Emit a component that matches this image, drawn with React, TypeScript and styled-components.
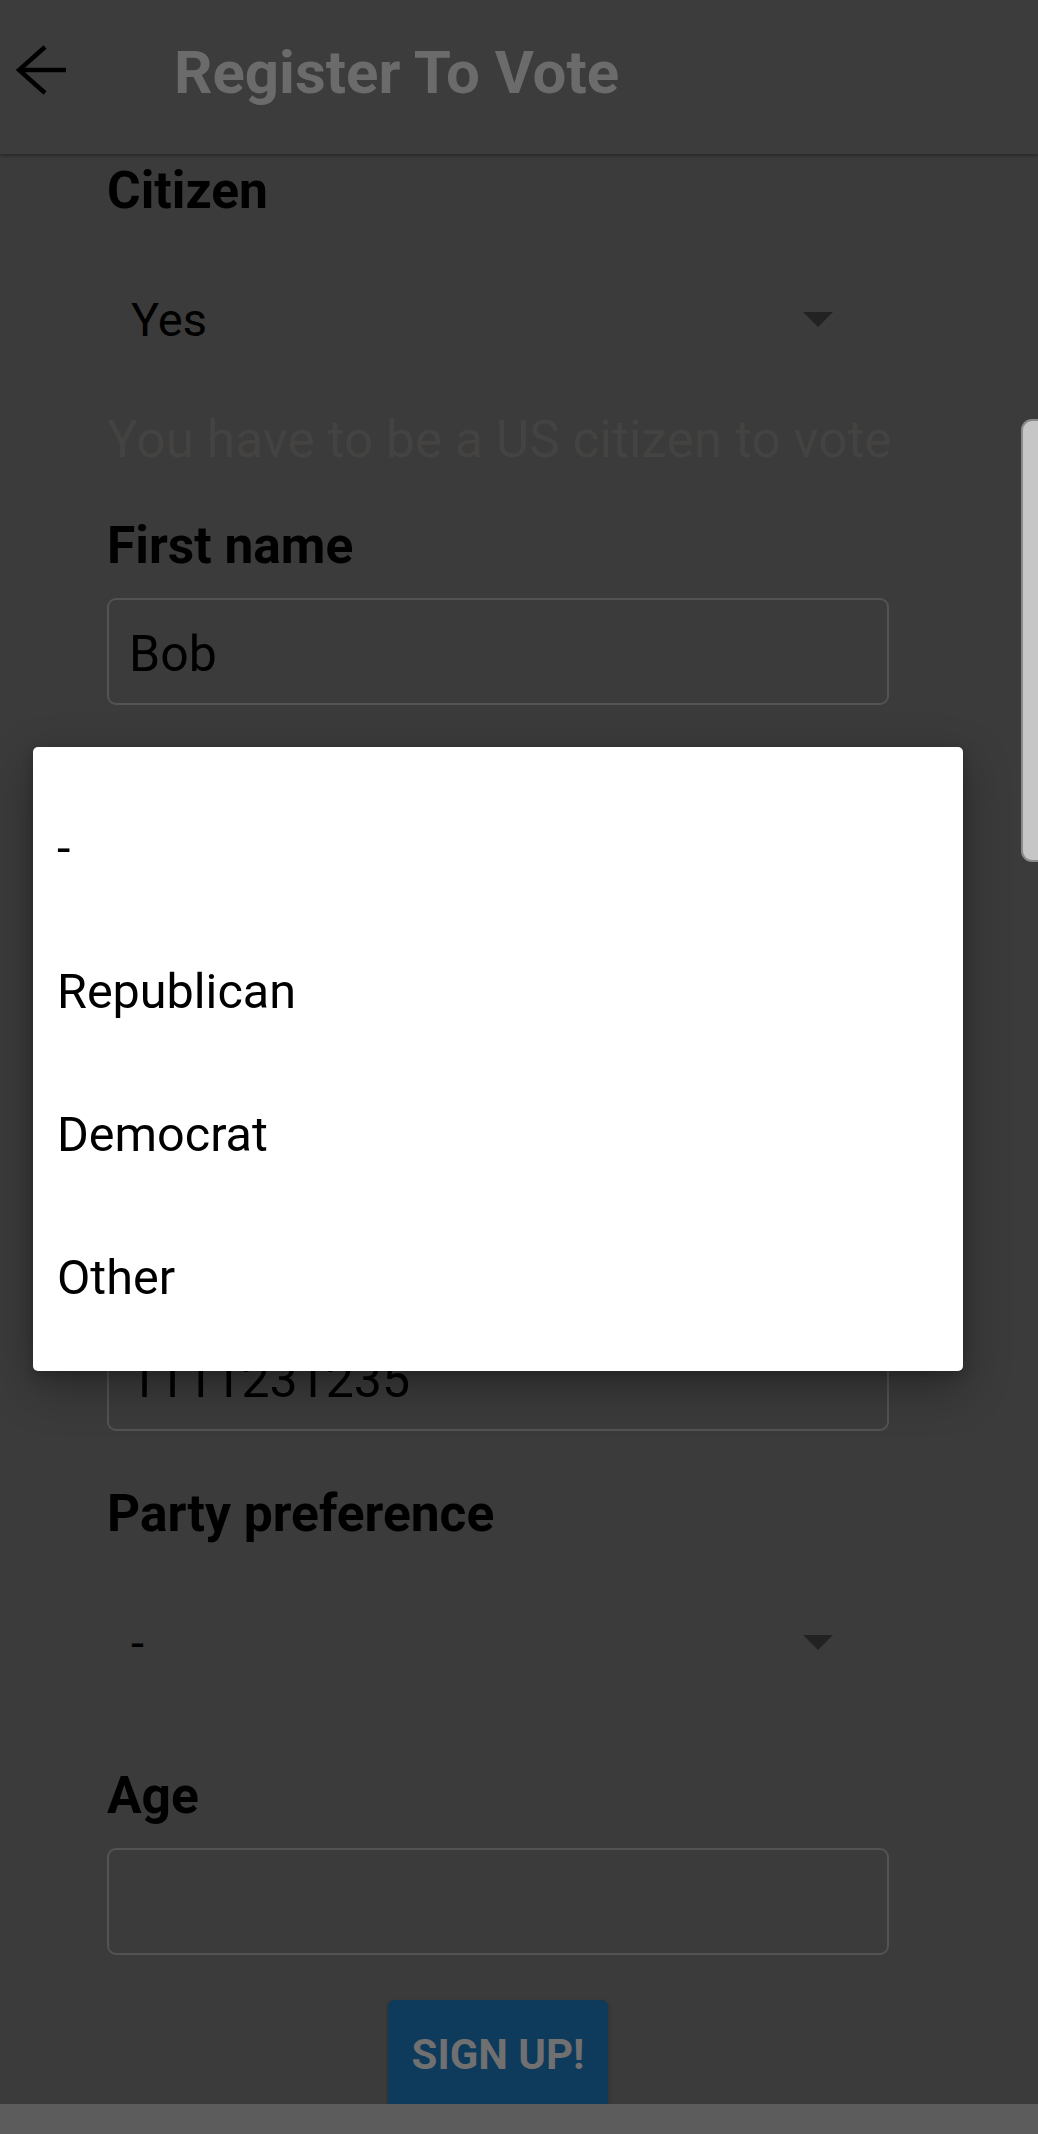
import React from "react";
import styled, { createGlobalStyle } from "styled-components";

const GlobalStyle = createGlobalStyle`
  html, body { margin: 0; padding: 0; background: #3a3b3a; }
  body { font-family: Roboto, "Noto Sans", Arial, sans-serif; }
  * { box-sizing: border-box; }
`;

const Screen = styled.div`
  position: relative;
  width: 1038px;
  height: 2134px;
  overflow: hidden;
  display: flex;
  flex-direction: column;
  background: #3a3b3a;
`;

const AppBar = styled.header`
  position: relative;
  z-index: 1;
  flex: none;
  height: 154px;
  display: flex;
  align-items: flex-start;
  padding: 45px 0 0 16px;
  background: #3b3c3b;
  box-shadow: 0 2px 3px rgba(0, 0, 0, 0.3);
`;

const BackIcon = styled.svg`
  flex: none;
  width: 52px;
  height: 50px;
`;

const Title = styled.h1`
  margin: -2px 0 0 106px;
  font-family: Roboto, sans-serif;
  font-weight: 700;
  font-size: 60px;
  line-height: 60px;
  letter-spacing: 0;
  color: #6b6b6b;
`;

const ScrollArea = styled.main`
  flex: 1;
  overflow: hidden;
`;

const Form = styled.div`
  width: 782px;
  margin-left: 107px;
  display: flex;
  flex-direction: column;
`;

const Field = styled.div<{ $top: number; $gap: number }>`
  display: flex;
  flex-direction: column;
  margin-top: ${(p) => p.$top}px;
  gap: ${(p) => p.$gap}px;
`;

const Label = styled.div`
  font-weight: 700;
  font-size: 51.5px;
  line-height: 60px;
  color: #000;
`;

const SelectBox = styled.div`
  height: 106px;
  display: flex;
  align-items: center;
  justify-content: space-between;
  padding: 0 56px 0 24px;
  font-size: 47px;
  color: #000;
`;

const Caret = styled.span`
  width: 0;
  height: 0;
  border-left: 15px solid transparent;
  border-right: 15px solid transparent;
  border-top: 15px solid #222;
`;

const Hint = styled.div`
  margin-top: 38px;
  font-size: 51.5px;
  line-height: 60px;
  color: #444342;
  white-space: nowrap;
`;

const TextBox = styled.div`
  height: 107px;
  display: flex;
  align-items: center;
  padding: 5px 0 0 20px;
  border: 2px solid #535353;
  border-radius: 9px;
  font-size: 50px;
  color: #000;
`;

const SubmitButton = styled.button`
  align-self: center;
  margin-top: 45px;
  width: 220px;
  height: 108px;
  border: none;
  border-radius: 6px;
  background: #0e3a5c;
  box-shadow: 0 2px 4px rgba(0, 0, 0, 0.25);
  font-family: Roboto, sans-serif;
  font-weight: 700;
  font-size: 42px;
  color: #707070;
  padding: 0;
`;

const BottomBar = styled.div`
  flex: none;
  height: 30px;
  background: #5c5c5d;
  position: relative;
  z-index: 1;
`;

const Dialog = styled.div`
  position: absolute;
  left: 33px;
  top: 747px;
  width: 930px;
  height: 624px;
  padding-top: 30px;
  background: #fff;
  border-radius: 5px;
  box-shadow: 0 16px 48px rgba(0, 0, 0, 0.32), 0 4px 12px rgba(0, 0, 0, 0.2);
  z-index: 3;
`;

const Option = styled.div`
  height: 143px;
  display: flex;
  align-items: center;
  padding-left: 24px;
  font-size: 48.5px;
  color: #000;
`;

const ScrollThumb = styled.div`
  position: absolute;
  right: 0;
  top: 419px;
  width: 17px;
  height: 443px;
  background: #c6c6c6;
  border: 2px solid #8a8a8a;
  border-right: none;
  border-radius: 11px 0 0 11px;
  z-index: 2;
`;

const textFields = [
  { label: "First name", value: "Bob" },
  { label: "Last name", value: "" },
  { label: "Email", value: "" },
  { label: "Phone number", value: "1111231235" },
];

const parties = ["-", "Republican", "Democrat", "Other"];

export default function App() {
  return (
    <>
      <GlobalStyle />
      <Screen>
        <AppBar>
          <BackIcon viewBox="0 0 52 50">
            <path
              d="M50 25 H4 M29 2 L3 25 L29 48"
              fill="none"
              stroke="#000"
              strokeWidth="4.5"
              strokeLinecap="butt"
              strokeLinejoin="miter"
            />
          </BackIcon>
          <Title>Register To Vote</Title>
        </AppBar>
        <ScrollArea>
          <Form>
            <Field $top={7} $gap={45}>
              <Label>Citizen</Label>
              <SelectBox>
                <span>Yes</span>
                <Caret />
              </SelectBox>
            </Field>
            <Hint>You have to be a US citizen to vote</Hint>
            {textFields.map((f, i) => (
              <Field key={f.label} $top={i === 0 ? 46 : 53} $gap={22}>
                <Label>{f.label}</Label>
                <TextBox>{f.value}</TextBox>
              </Field>
            ))}
            <Field $top={53} $gap={45}>
              <Label>Party preference</Label>
              <SelectBox>
                <span>-</span>
                <Caret />
              </SelectBox>
            </Field>
            <Field $top={71} $gap={22}>
              <Label>Age</Label>
              <TextBox />
            </Field>
            <SubmitButton>SIGN UP!</SubmitButton>
          </Form>
        </ScrollArea>
        <BottomBar />
        <ScrollThumb />
        <Dialog>
          {parties.map((p) => (
            <Option key={p}>{p}</Option>
          ))}
        </Dialog>
      </Screen>
    </>
  );
}
